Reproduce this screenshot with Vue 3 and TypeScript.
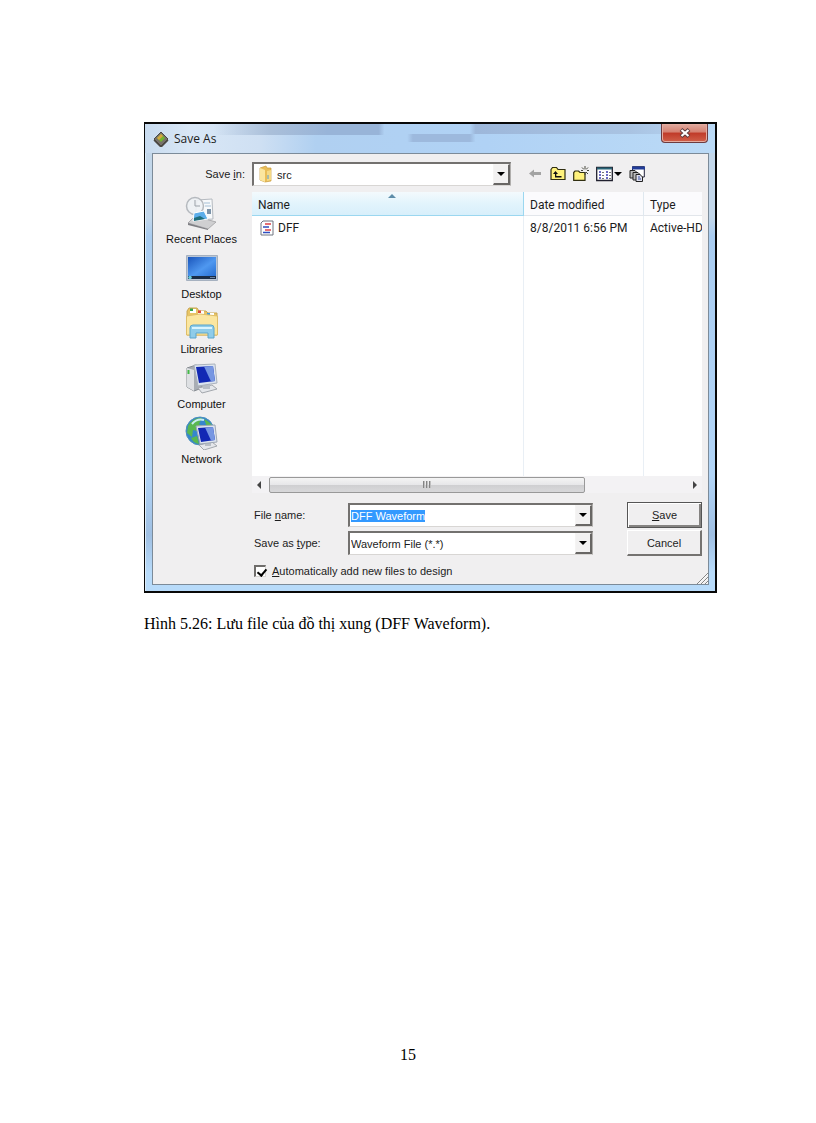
<script setup lang="ts">
import { onMounted, ref } from 'vue'

interface FileRow {
  name: string
  modified: string
  type: string
}

const places: string[] = ['Recent Places', 'Desktop', 'Libraries', 'Computer', 'Network']
const files: FileRow[] = [{ name: 'DFF', modified: '8/8/2011 6:56 PM', type: 'Active-HD' }]

const folder = ref('src')
const fileName = ref('DFF Waveform')
const fileType = ref('Waveform File (*.*)')
const addToDesign = ref(true)
const nameInput = ref<HTMLInputElement | null>(null)

onMounted(() => {
  nameInput.value?.focus()
  nameInput.value?.select()
})
</script>

<template>
  <main class="page">
    <figure class="figure">
      <section class="dialog" aria-label="Save As">
        <header class="titlebar">
          <svg class="app-icon" viewBox="0 0 16 16" aria-hidden="true">
            <path d="M8 1 15 8 8 15 1 8Z" fill="#77726a" stroke="#4b4843" />
            <path d="M1 9 8 16 15 9" fill="none" stroke="#4c4944" stroke-width="1.5" />
            <path d="M8 3 12 7 8 11 4 7Z" fill="#72b52f" />
            <path d="M8 3 10 5 6 9 4 7Z" fill="#d8a640" />
          </svg>
          <h1 class="title">Save As</h1>
          <button class="close" type="button" aria-label="Close">
            <svg viewBox="0 0 12 10" aria-hidden="true">
              <path d="M2 1.5 10 8.5M10 1.5 2 8.5" stroke="#5b3a3c" stroke-width="4" />
              <path d="M2.5 2 9.5 8M9.5 2 2.5 8" stroke="#fff" stroke-width="2.2" />
            </svg>
          </button>
        </header>

        <form class="client" @submit.prevent>
          <div class="location">
            <label for="folder">Save <u>i</u>n:</label>
            <div class="combo">
              <svg class="folder-icon" viewBox="0 0 16 18" aria-hidden="true">
                <path d="M2 3 8 1 9 3 13 3 13 16 7 17 2 15Z" fill="#e9bd58" stroke="#c99b3b" stroke-width=".7" />
                <path d="M2 3 7 5 7 17 2 15Z" fill="#fbe6a0" />
                <path d="M9 6 13 5 13 15 9 16Z" fill="#f5d985" />
                <path d="M10 10v4" stroke="#5b9ed0" />
              </svg>
              <select id="folder" v-model="folder" class="with-icon"><option>src</option></select>
              <span class="arrow" aria-hidden="true"></span>
            </div>
            <div class="tools">
              <button type="button" class="tool" aria-label="Back">
                <svg viewBox="0 0 16 16"><path d="M2 7.5 7 3.5V6H14V9H7V11.5Z" fill="#a3a3a3" /></svg>
              </button>
              <button type="button" class="tool" aria-label="Up one level">
                <svg viewBox="0 0 16 16">
                  <path d="M1 3.5 2.5 1.5H6.5L8 3.5H15V13.5H1Z" fill="#fff27c" stroke="#302e10" stroke-width="1.2" />
                  <path d="M5.5 5 3 8H5V11.5H11.5V10H6.3V8H8Z" fill="#111" />
                </svg>
              </button>
              <button type="button" class="tool" aria-label="New folder">
                <svg viewBox="0 0 16 16">
                  <path d="M.7 14.3V6.5L2 5H5.5L7 6.5H12V14.3Z" fill="#fff27c" stroke="#302e10" stroke-width="1.2" />
                  <path d="M12 0V3M12 6V9M8 4.5H10M14 4.5H16M9 1.5 11 3.5M15 1.5 13 3.5M15 8 13 6" stroke="#45453b" />
                </svg>
              </button>
              <button type="button" class="tool views" aria-label="Views">
                <svg viewBox="0 0 26 16">
                  <path d="M.7 1.5H16.3V14.5H.7Z" fill="#fff" stroke="#20202e" stroke-width="1.3" />
                  <path d="M1 2.5H16" stroke="#296477" stroke-width="2" />
                  <path d="M3 6H5M3 9H5M3 12H5M10 6H12M10 9H12M10 12H12" stroke="#3b3bb0" stroke-width="1.6" />
                  <path d="M6 6.5H8M6 9.5H8M6 12.5H8M13 6.5H15M13 9.5H15M13 12.5H15" stroke="#777" />
                  <path d="M18 6H26L22 10Z" fill="#000" />
                </svg>
              </button>
              <button type="button" class="tool" aria-label="Windows">
                <svg viewBox="0 0 16 16">
                  <path d="M3.5 .7H15.3V11H3.5Z" fill="#fff" stroke="#22223c" />
                  <path d="M3 2H16" stroke="#223c98" stroke-width="3" />
                  <path d="M1 4.5H6L8 6.5V12H1Z" fill="#bbb" stroke="#222" />
                  <path d="M4 6.5H9L11 8.5V14H4Z" fill="#bbb" stroke="#222" />
                  <path d="M7 8.5H11L13.5 11V15.5H7Z" fill="#dfe0ee" stroke="#222" />
                  <path d="M9 11H11M9 13H12" stroke="#334a9b" />
                </svg>
              </button>
            </div>
          </div>

          <div class="body">
            <nav class="places" aria-label="Places">
              <button v-for="place in places" :key="place" type="button" class="place">
                <svg v-if="place === 'Recent Places'" viewBox="0 0 34 34" aria-hidden="true">
                  <path d="M3 27 10 20 31 26 23 33Z" fill="#cfcfd1" stroke="#969699" stroke-width=".7" />
                  <path d="M3 27 23 33V34L3 29Z" fill="#7e7e83" />
                  <path d="M12 4 27 3 28 23 10 24Z" fill="#f7f9fb" stroke="#b5bac0" />
                  <circle cx="10" cy="10" r="8.5" fill="#edf1f4" fill-opacity=".9" stroke="#b5b9be" stroke-width="1.5" />
                  <path d="M10 4V10H15" fill="none" stroke="#9ba1a8" />
                  <path d="M9 17 19 15 23 23 8 25Z" fill="#5badea" stroke="#fff" />
                  <path d="M9 22 15 20 20 23 9 25Z" fill="#1e6d7b" />
                  <path d="M19 7H25M20 10H26" stroke="#a5bfd5" />
                  <path d="M22 13H26V18H22Z" fill="#7c93a9" />
                </svg>
                <svg v-else-if="place === 'Desktop'" viewBox="0 0 34 34" aria-hidden="true">
                  <defs>
                    <linearGradient id="desk" x2="1" y2="1">
                      <stop stop-color="#1a55bb" /><stop offset=".55" stop-color="#4f98f0" /><stop offset="1" stop-color="#246bd0" />
                    </linearGradient>
                  </defs>
                  <path d="M1.5 4.5H32.5V29.5H1.5Z" fill="#bac6d6" stroke="#a6b1c0" />
                  <path d="M3 6H31V26H3Z" fill="url(#desk)" />
                  <path d="M3 25H31V28H3Z" fill="#1a2c45" />
                  <circle cx="5" cy="26.5" r="1.8" fill="#6acadb" />
                  <path d="M25 26.5H30" stroke="#6d83a2" />
                </svg>
                <svg v-else-if="place === 'Libraries'" viewBox="0 0 34 34" aria-hidden="true">
                  <path d="M2 29V5L4 2H12L14 5H21L23 7H32V29Z" fill="#e9c565" stroke="#c9a653" />
                  <path d="M5 3H11V7H5ZM13 5H19V9H13ZM22 7H29V11H22Z" fill="#fff" />
                  <path d="M5 2.5H8V5H5Z" fill="#36a54c" />
                  <path d="M13 4.5H16V7H13Z" fill="#df4938" />
                  <path d="M22 7H25V9H22Z" fill="#419ce0" />
                  <path d="M1.5 10 15 8 32.5 10V29H1.5Z" fill="#fbe6a0" stroke="#dfbe68" />
                  <path d="M5 32V22Q5 19 8 19H26Q29 19 29 22V32H23V27H11V32Z" fill="#8fcce9" stroke="#5aa5cc" />
                  <path d="M7 22H27" stroke="#d9f4ff" stroke-width="2" />
                </svg>
                <svg v-else viewBox="0 0 34 34" aria-hidden="true">
                  <template v-if="place === 'Computer'">
                    <path d="M2 7 11 4 17 7V27L9 30 2 26Z" fill="#a8adb4" stroke="#858a90" />
                    <path d="M2 7 9 9V30L2 26Z" fill="#dee0e3" />
                    <path d="M3.5 9V13" stroke="#45b947" stroke-width="2" />
                    <path d="M13 27 27 24 32 28 17 32Z" fill="#e5e7eb" stroke="#a3a7ad" />
                    <path d="M18 22H25V28H18Z" fill="#b9bec5" />
                    <path d="M9 4 30 3 32 22 13 25Z" fill="#dce4ef" stroke="#aab2bc" />
                    <path d="M11 6 28 5 30 20 14 22Z" fill="#1228b4" />
                    <path d="M19 5.5 28 5 30 20 26 20.5Z" fill="#7696e2" />
                  </template>
                  <template v-else>
                    <circle cx="15" cy="15" r="14" fill="#3686cd" stroke="#4c91bb" />
                    <path d="M3 10Q8 1 17 2L14 8 18 11 12 15 8 14 7 21 2 17ZM19 3Q26 6 28 12L22 11ZM6 22 12 20 14 28Q8 27 6 22Z" fill="#59b750" />
                    <path d="M7 8Q12 2 19 4" stroke="#c8ecf1" stroke-width="2" fill="none" />
                    <path d="M14 29 27 26 32 30 19 34Z" fill="#e5e7eb" stroke="#a3a7ad" />
                    <path d="M20 25H26V30H20Z" fill="#b9bec5" />
                    <path d="M11 10 30 9 32 26 15 28Z" fill="#dce4ef" stroke="#9fa8b4" />
                    <path d="M13 12 28 11 30 24 16 26Z" fill="#1228b4" />
                    <path d="M20 11.5 28 11 30 24 26 24.5Z" fill="#7696e2" />
                  </template>
                </svg>
                <span>{{ place }}</span>
              </button>
            </nav>

            <div class="content">
              <div class="list">
                <table class="files">
                  <colgroup><col class="col-name" /><col class="col-date" /><col /></colgroup>
                  <thead>
                    <tr><th class="sorted">Name</th><th>Date modified</th><th>Type</th></tr>
                  </thead>
                  <tbody>
                    <tr v-for="file in files" :key="file.name">
                      <td>
                        <span class="file">
                          <svg viewBox="0 0 14 16" aria-hidden="true">
                            <path d="M3 1H13V15H1V3Z" fill="#fff" stroke="#6e7480" />
                            <path d="M5 4H11M5 10H11" stroke="#dc4148" stroke-width="1.4" />
                            <path d="M3 7H9M3 12.5H10" stroke="#2f4fc0" stroke-width="1.4" />
                          </svg>{{ file.name }}
                        </span>
                      </td>
                      <td>{{ file.modified }}</td>
                      <td>{{ file.type }}</td>
                    </tr>
                    <tr class="filler"><td></td><td></td><td></td></tr>
                  </tbody>
                </table>
              </div>
              <div class="scrollbar" aria-hidden="true">
                <span class="tri left"></span>
                <div class="track"><div class="thumb"><i></i><i></i><i></i></div></div>
                <span class="tri right"></span>
              </div>

              <div class="fields">
                <label for="file-name">File <u>n</u>ame:</label>
                <div class="combo">
                  <input id="file-name" ref="nameInput" v-model="fileName" type="text" spellcheck="false" />
                  <span class="arrow" aria-hidden="true"></span>
                </div>
                <button class="action primary" type="submit"><span><u>S</u>ave</span></button>
                <label for="file-type">Save as <u>t</u>ype:</label>
                <div class="combo">
                  <select id="file-type" v-model="fileType"><option>Waveform File (*.*)</option></select>
                  <span class="arrow" aria-hidden="true"></span>
                </div>
                <button class="action" type="button">Cancel</button>
              </div>
              <label class="check">
                <input v-model="addToDesign" type="checkbox" />
                <span><u>A</u>utomatically add new files to design</span>
              </label>
            </div>
          </div>
          <svg class="grip" viewBox="0 0 12 12" aria-hidden="true">
            <path d="M1 12 12 1M5 12 12 5M9 12 12 9" stroke="#858585" />
            <path d="M2 12 12 2M6 12 12 6M10 12 12 10" stroke="#fff" stroke-width=".6" />
          </svg>
        </form>
      </section>
      <figcaption class="caption">Hình 5.26: Lưu file của đồ thị xung (DFF Waveform).</figcaption>
    </figure>
    <footer class="page-number">15</footer>
  </main>
</template>

<style>
body {
  margin: 0;
  background: #fff;
}
</style>

<style scoped>
* {
  box-sizing: border-box;
}

.page {
  display: flex;
  flex-direction: column;
  min-height: 100vh;
  padding: 122px 0 56px;
}

.figure {
  margin: 0 99px 0 144px;
}

.dialog {
  border: 2px solid #080808;
  border-left-width: 1px;
  padding: 0 6px 6px 7px;
  background: linear-gradient(#c3d7ea 20%, #a9ccf0 24%, #b2d5f7 75%, #9fbfe2 88%, #b8dbfa 96%);
  box-shadow: inset 1px 1px #dcecf8;
  color: #1c1c1c;
  font-family: "Liberation Sans", Arial, sans-serif;
  font-size: 11px;
}

.titlebar {
  display: flex;
  align-items: center;
  gap: 5px;
  height: 29px;
  margin: 0 -6px 0 -7px;
  padding: 0 7px 0 8px;
  background:
    linear-gradient(90deg, transparent 12%, #aabfd9 22%, #98b4d8 32%, #98b4d8 41%, transparent 42%) 0 0 / 100% 11px no-repeat,
    linear-gradient(90deg, transparent 46%, #9db9dd 47%, #9db9dd 57%, transparent 58%) 0 10px / 100% 8px no-repeat,
    linear-gradient(90deg, transparent 57%, #9db7da 58%, #a9c3e2 85%, transparent) 0 0 / 100% 10px no-repeat,
    linear-gradient(90deg, #c8dbef, #d9e7f6 8%, #cfe0f3 20%, #b0d0f1 30%, #b0d2f5 60%, #bbdaf6);
}

.app-icon {
  width: 16px;
  height: 16px;
}

.title {
  flex: 1;
  margin: 0;
  font: 12px "Open Sans", "Noto Sans", sans-serif;
}

.close {
  display: flex;
  align-self: flex-start;
  align-items: center;
  justify-content: center;
  width: 47px;
  height: 19px;
  padding: 0;
  border: 1px solid #6d3b3f;
  border-top: 0;
  border-radius: 0 0 4px 4px;
  background: linear-gradient(#e0aba0, #d58070 45%, #c03a28 50%, #d0604a);
  box-shadow: inset 0 0 0 1px #e5aca0;
}

.close svg {
  width: 12px;
  height: 10px;
}

.client {
  position: relative;
  padding: 8px 6px 5px 0;
  border: 1px solid #7c8b99;
  background: #f0eff0;
}

.location {
  display: grid;
  grid-template-columns: 92px 259px 1fr;
  column-gap: 7px;
  align-items: center;
  font-size: 12px;
}

.location > label {
  font-size: 11px;
  text-align: right;
}

.combo {
  position: relative;
  height: 24px;
  border: 2px solid #73716f;
  border-right: 1px solid #b0aeac;
  border-bottom: 1px solid #d8d6d4;
  background: #fff;
  font-size: 11px;
}

.combo select,
.combo input {
  display: block;
  width: 100%;
  height: 100%;
  padding: 0 18px 0 1px;
  border: 0;
  outline: 0;
  appearance: none;
  background: transparent;
  color: #1c1c1c;
  font: inherit;
}

.combo .with-icon {
  padding-left: 23px;
}

.combo input::selection {
  background: #3399ff;
  color: #fff;
}

.folder-icon {
  position: absolute;
  top: 1px;
  left: 4px;
  width: 16px;
  height: 18px;
}

.arrow {
  position: absolute;
  top: 0;
  right: 0;
  bottom: 0;
  display: grid;
  place-items: center;
  width: 17px;
  border: 1px solid #f5f4f3;
  border-right: 2px solid #686664;
  border-bottom: 2px solid #686664;
  background: #f2f1f1;
  pointer-events: none;
}

.arrow::before {
  content: "";
  border: 4px solid transparent;
  border-top-color: #000;
  border-bottom: 0;
}

.tools {
  display: flex;
  align-items: center;
  gap: 7px;
  padding-left: 9px;
}

.tool {
  width: 16px;
  height: 16px;
  padding: 0;
  border: 0;
  background: none;
}

.tool svg {
  display: block;
  width: 100%;
  height: 100%;
}

.tool.views {
  width: 26px;
}

.body {
  display: grid;
  grid-template-columns: 99px minmax(0, 1fr);
  padding-top: 6px;
}

.places {
  display: flex;
  flex-direction: column;
  padding: 4px 2px 0 0;
}

.place {
  display: flex;
  flex-direction: column;
  align-items: center;
  gap: 1px;
  height: 55px;
  padding: 0;
  border: 0;
  background: none;
  color: #111;
  font: inherit;
  line-height: 16px;
}

.place svg {
  width: 34px;
  height: 34px;
}

.list {
  height: 284px;
  overflow: hidden;
  background: #fff;
}

.files {
  width: 100%;
  height: 100%;
  table-layout: fixed;
  border-collapse: separate;
  border-spacing: 0;
  font: 12px Roboto, "Open Sans", sans-serif;
}

.col-name {
  width: 272px;
}

.col-date {
  width: 120px;
}

.files th {
  height: 24px;
  padding: 3px 6px 0;
  border-right: 1px solid #dfe8ef;
  border-bottom: 1px solid #e2e6eb;
  background: #fbfbfd;
  font-weight: 400;
  text-align: left;
}

.files .sorted {
  position: relative;
  border-right-color: #9bd7f0;
  border-bottom-color: #9bd7f0;
  background: linear-gradient(#f3fafd, #e2f4fc 50%, #d8effb);
}

.sorted::after {
  content: "";
  position: absolute;
  top: 2px;
  left: 50%;
  border: 4px solid transparent;
  border-top: 0;
  border-bottom-color: #5e8da9;
}

.files td {
  height: 24px;
  padding: 0 6px;
  border-right: 1px solid #e9eff5;
  white-space: nowrap;
}

.files th:last-child,
.files td:last-child {
  border-right: 0;
}

.files td:last-child {
  padding-right: 0;
}

.files .filler td {
  height: auto;
}

.file {
  display: flex;
  align-items: center;
  gap: 4px;
  padding-left: 2px;
}

.file svg {
  width: 14px;
  height: 16px;
}

.scrollbar {
  display: flex;
  align-items: center;
  gap: 8px;
  height: 17px;
  padding: 0 5px;
  background: #f3f2f4;
}

.tri {
  border: 4px solid transparent;
}

.tri.left {
  border-left: 0;
  border-right-color: #444;
}

.tri.right {
  border-right: 0;
  border-left-color: #444;
}

.track {
  flex: 1;
  height: 16px;
}

.thumb {
  display: flex;
  align-items: center;
  justify-content: center;
  gap: 1px;
  width: 76%;
  height: 16px;
  border: 1px solid #999;
  border-radius: 2px;
  background: linear-gradient(#f4f4f4, #e7e7e9 48%, #cfcfd1 52%, #d8d8da);
}

.thumb i {
  width: 2px;
  height: 7px;
  background: linear-gradient(90deg, #666, #ddd);
}

.fields {
  display: grid;
  grid-template-columns: 96px minmax(0, 245px) minmax(0, 1fr);
  row-gap: 2px;
  align-items: center;
  padding-top: 9px;
}

.fields label {
  padding-left: 2px;
}

.action {
  justify-self: end;
  width: 75px;
  height: 26px;
  border: 1px solid #fff;
  border-right: 2px solid #757371;
  border-bottom: 2px solid #757371;
  background: #f0eff0;
  color: #1c1c1c;
  font: inherit;
}

.action.primary {
  border: 1px solid #555;
  box-shadow: inset 1px 1px #fff, inset -2px -2px #858381;
}

.check {
  display: flex;
  align-items: center;
  gap: 6px;
  width: fit-content;
  height: 16px;
  margin-top: 7px;
  padding-left: 2px;
}

.check input {
  position: relative;
  width: 12px;
  height: 12px;
  margin: 0;
  appearance: none;
  border: 1px solid #d8d6d4;
  border-top: 2px solid #6f6d6b;
  border-left: 2px solid #6f6d6b;
  background: #fff;
}

.check input:checked::after {
  content: "";
  position: absolute;
  top: 0;
  left: 3px;
  width: 4px;
  height: 7px;
  border: solid #000;
  border-width: 0 2px 2px 0;
  transform: rotate(40deg);
}

.grip {
  position: absolute;
  right: 0;
  bottom: 0;
  width: 12px;
  height: 12px;
}

.caption {
  margin-top: 20px;
  color: #000;
  font: 16px/22px "Liberation Serif", "Times New Roman", serif;
}

.page-number {
  margin-top: auto;
  color: #000;
  font: 16px/24px "Liberation Serif", "Times New Roman", serif;
  text-align: center;
}
</style>
